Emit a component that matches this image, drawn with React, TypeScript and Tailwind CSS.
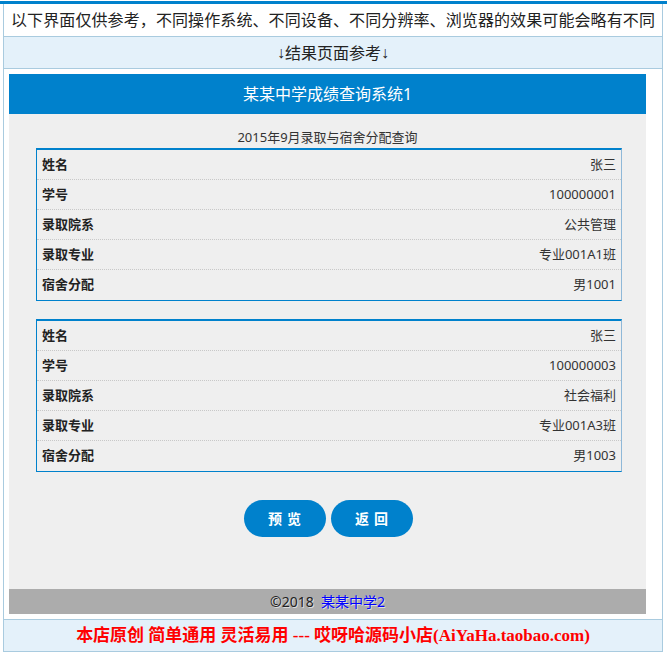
const rows1 = [
  ["姓名", "张三"],
  ["学号", "100000001"],
  ["录取院系", "公共管理"],
  ["录取专业", "专业001A1班"],
  ["宿舍分配", "男1001"],
];

const rows2 = [
  ["姓名", "张三"],
  ["学号", "100000003"],
  ["录取院系", "社会福利"],
  ["录取专业", "专业001A3班"],
  ["宿舍分配", "男1003"],
];

function InfoTable({ rows, className }: { rows: string[][]; className?: string }) {
  return (
    <div
      className={
        "ml-[27px] w-[586px] border-t-2 border-b border-l border-r border-t-[#0081cc] border-b-[#0081cc] border-l-[#0081cc] border-r-[#8fb8d8] border-l-dotted " +
        (className ?? "")
      }
    >
      {rows.map(([label, value], i) => (
        <div
          key={label}
          className={
            "flex h-[30px] items-center justify-between px-[5px] text-[13px] " +
            (i < rows.length - 1 ? "border-b border-dotted border-[#c8c8c8]" : "h-[29px]")
          }
        >
          <span className="font-bold text-[#222]">{label}</span>
          <span className="text-[#333]">{value}</span>
        </div>
      ))}
    </div>
  );
}

export default function App() {
  return (
    <div className="w-[667px] h-[654px] bg-white font-['Noto_Sans','Noto_Sans_CJK_SC',sans-serif] text-[#222]">
      <div className="pt-px">
        <div className="h-[3px] bg-[#0081cc]" />
      </div>
      <div className="ml-[3px] w-[660px] border-x border-b border-[#a9cbdf]">
        <div className="flex h-[33px] items-center justify-center border-b border-[#a9cbdf] text-[16px] tracking-[0.1px] text-[#222]">
          以下界面仅供参考，不同操作系统、不同设备、不同分辨率、浏览器的效果可能会略有不同
        </div>
        <div className="flex h-[32px] items-center justify-center border-b border-[#a9cbdf] bg-[#e4f1fa] text-[16px]">
          <span className="font-['Liberation_Sans',sans-serif]">↓</span>
          结果页面参考
          <span className="font-['Liberation_Sans',sans-serif]">↓</span>
        </div>

        <div className="p-[5px]">
          <div className="flex h-[540px] w-[637px] flex-col">
            <div className="flex h-[40px] items-center justify-center bg-[#0081cc] text-[16px] text-white">
              某某中学成绩查询系统1
            </div>
            <div className="flex-1 bg-[#efefef]">
              <div className="pt-[12px] text-center text-[13px] leading-[22px] text-[#333]">
                2015年9月录取与宿舍分配查询
              </div>
              <InfoTable rows={rows1} />
              <InfoTable rows={rows2} className="mt-[18px]" />
              <div className="mt-[28px] flex justify-center gap-[5px] pl-[2px]">
                <button className="h-[37px] w-[82px] rounded-full bg-[#0081cc] pl-[4px] text-[14px] font-bold tracking-[5px] text-white">
                  预览
                </button>
                <button className="h-[37px] w-[82px] rounded-full bg-[#0081cc] pl-[4px] text-[14px] font-bold tracking-[5px] text-white">
                  返回
                </button>
              </div>
            </div>
            <div className="flex h-[25px] items-center justify-center bg-[#acacac] text-[14px] text-[#222] [text-shadow:1px_1px_0_#ddd]">
              ©2018&nbsp;&nbsp;
              <a className="text-[#0000ff]">某某中学2</a>
            </div>
          </div>
        </div>

        <div className="flex h-[32px] items-center justify-center border-t border-[#a9cbdf] bg-[#e4f1fa] font-['Liberation_Serif','Noto_Sans_CJK_SC',serif] text-[17px] font-bold text-[#ff0000]">
          本店原创 简单通用 灵活易用 --- 哎呀哈源码小店(AiYaHa.taobao.com)
        </div>
      </div>
    </div>
  );
}
